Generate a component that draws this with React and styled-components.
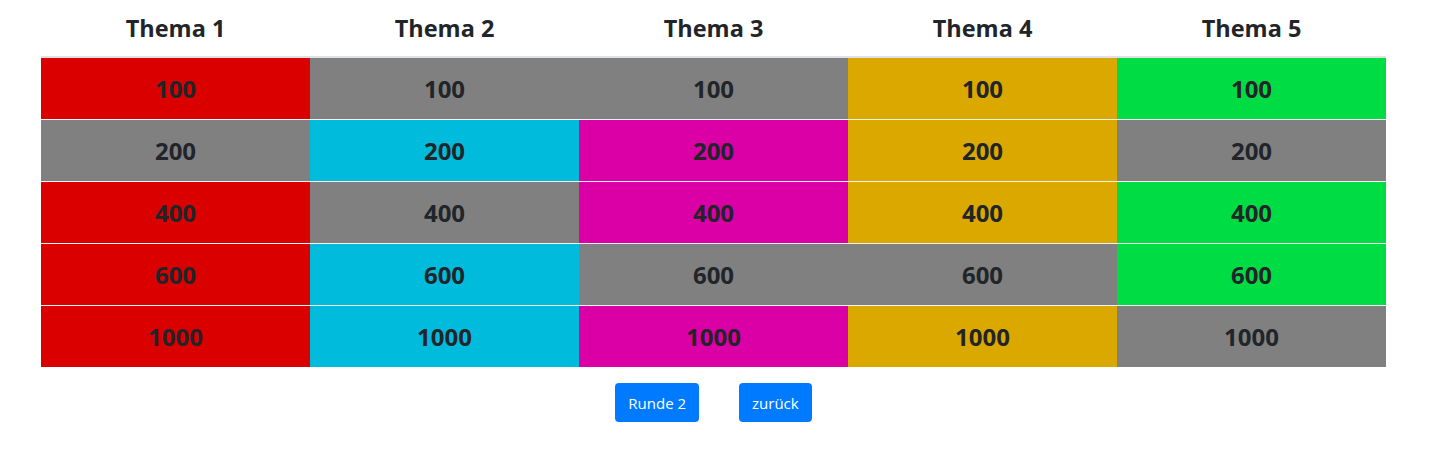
import React from 'react'
import styled, { createGlobalStyle } from 'styled-components'

const GlobalStyle = createGlobalStyle`
  body {
    margin: 0;
    background: #fff;
    font-family: "Open Sans", "Noto Sans", "Liberation Sans", sans-serif;
    color: #212529;
  }
`

const colors = {
    red: '#db0000',
    gray: '#808080',
    cyan: '#00bbdb',
    magenta: '#db00a6',
    gold: '#dba800',
    green: '#00dd44',
}

const themes = ['Thema 1', 'Thema 2', 'Thema 3', 'Thema 4', 'Thema 5']

const rows = [
    { points: 100, cells: ['red', 'gray', 'gray', 'gold', 'green'] },
    { points: 200, cells: ['gray', 'cyan', 'magenta', 'gold', 'gray'] },
    { points: 400, cells: ['red', 'gray', 'magenta', 'gold', 'green'] },
    { points: 600, cells: ['red', 'cyan', 'gray', 'gray', 'green'] },
    { points: 1000, cells: ['red', 'cyan', 'magenta', 'gold', 'gray'] },
]

const Page = styled.div`
    padding: 0 53px 0 41px;
`

const Board = styled.div`
    width: 1345px;
`

const HeadRow = styled.div`
    display: grid;
    grid-template-columns: repeat(5, 1fr);
    height: 56px;
    border-bottom: 2px solid #dee2e6;
`

const HeadCell = styled.div`
    display: flex;
    align-items: center;
    justify-content: center;
    font-size: 23.5px;
    font-weight: 700;
`

const Row = styled.div`
    display: grid;
    grid-template-columns: repeat(5, 1fr);
    height: 61px;
    & + & {
        border-top: 1px solid #f4f4f4;
    }
`

const Cell = styled.div`
    display: flex;
    align-items: center;
    justify-content: center;
    background: ${(p) => colors[p.$tone]};
    font-size: 24px;
    font-weight: 700;
    color: #212529;
`

const Actions = styled.div`
    display: flex;
    justify-content: center;
    gap: 40px;
    padding-top: 16px;
    width: 1345px;
`

const Button = styled.button`
    height: 39px;
    padding: 0 13px;
    border: none;
    border-radius: 4px;
    background: #007bff;
    color: #fff;
    font-family: "Open Sans", "Noto Sans", sans-serif;
    font-size: 15px;
    cursor: pointer;
`

export default function App() {
    return (
        <Page>
            <GlobalStyle />
            <Board>
                <HeadRow>
                    {themes.map((t) => (
                        <HeadCell key={t}>{t}</HeadCell>
                    ))}
                </HeadRow>
                {rows.map((r) => (
                    <Row key={r.points}>
                        {r.cells.map((tone, i) => (
                            <Cell key={i} $tone={tone}>
                                {r.points}
                            </Cell>
                        ))}
                    </Row>
                ))}
            </Board>
            <Actions>
                <Button>Runde 2</Button>
                <Button>zurück</Button>
            </Actions>
        </Page>
    )
}
